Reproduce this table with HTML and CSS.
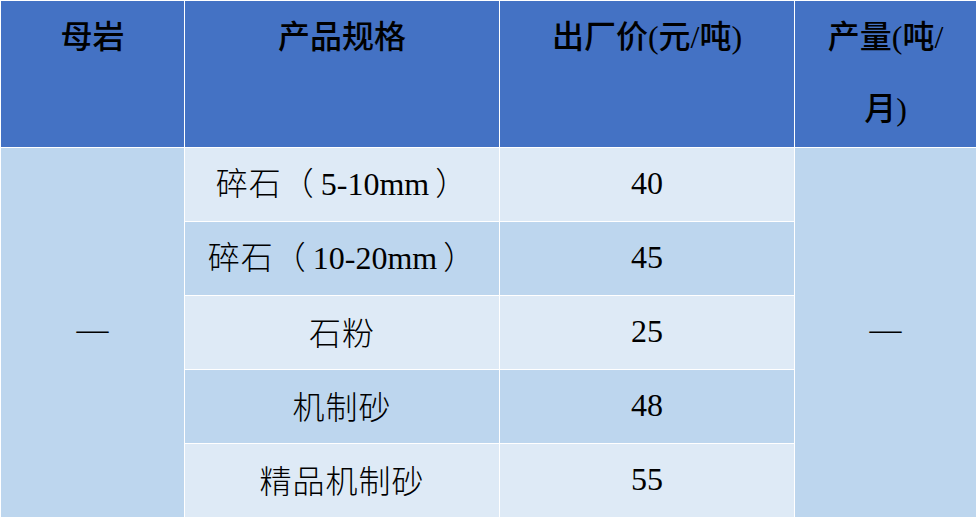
FILE: index.html
```html
<!DOCTYPE html>
<html lang="zh-CN">
<head>
<meta charset="utf-8">
<title>产品价格</title>
<link rel="stylesheet" href="styles.css">
</head>
<body>
<table class="price-table">
  <colgroup>
    <col class="c1">
    <col class="c2">
    <col class="c3">
    <col class="c4">
  </colgroup>
  <thead>
    <tr class="head-row">
      <th>母岩</th>
      <th>产品规格</th>
      <th>出厂价(元/吨)</th>
      <th class="wrap">产量(吨/月)</th>
    </tr>
  </thead>
  <tbody>
    <tr class="row light">
      <td class="merged" rowspan="5">—</td>
      <td class="cn">碎石（<span class="lat">5-10mm</span>）</td>
      <td class="num">40</td>
      <td class="merged" rowspan="5">—</td>
    </tr>
    <tr class="row dark">
      <td class="cn">碎石（<span class="lat">10-20mm</span>）</td>
      <td class="num">45</td>
    </tr>
    <tr class="row light">
      <td class="cn">石粉</td>
      <td class="num">25</td>
    </tr>
    <tr class="row dark">
      <td class="cn">机制砂</td>
      <td class="num">48</td>
    </tr>
    <tr class="row light">
      <td class="cn">精品机制砂</td>
      <td class="num">55</td>
    </tr>
  </tbody>
</table>
</body>
</html>
```
FILE: styles.css
```css
html, body {
  margin: 0;
  padding: 0;
  background: #ffffff;
}

.price-table {
  width: 976px;
  border-collapse: collapse;
  table-layout: fixed;
  border: 1px solid #ffffff;
  font-family: "Liberation Serif", "Noto Sans CJK SC", serif;
  font-size: 32px;
  color: #000000;
}

.c1 { width: 184px; }
.c2 { width: 315px; }
.c3 { width: 295px; }
.c4 { width: 182px; }

.price-table th,
.price-table td {
  border: 1px solid #ffffff;
  text-align: center;
  padding: 0;
}

.head-row {
  height: 147px;
}

.head-row th {
  background: #4472c4;
  font-weight: 500;
  vertical-align: top;
  line-height: 72px;
  font-family: "Liberation Serif", "Noto Sans CJK SC", sans-serif;
}

.head-row th.wrap {
  padding: 0 14px;
}

.row {
  height: 74px;
}

.price-table .row td {
  vertical-align: middle;
  line-height: 40px;
  padding-bottom: 4px;
}

.price-table td.merged {
  background: #bdd6ee;
  padding-bottom: 8px;
}

.light td { background: #deeaf6; }
.dark td { background: #bdd6ee; }

.cn {
  font-family: "Noto Sans CJK SC", sans-serif;
  font-weight: 300;
  letter-spacing: 1px;
}

.cn .lat {
  font-family: "Liberation Serif", serif;
  font-weight: normal;
  letter-spacing: 0;
  padding: 0 6px;
}

.num {
  font-family: "Liberation Serif", serif;
}
```
